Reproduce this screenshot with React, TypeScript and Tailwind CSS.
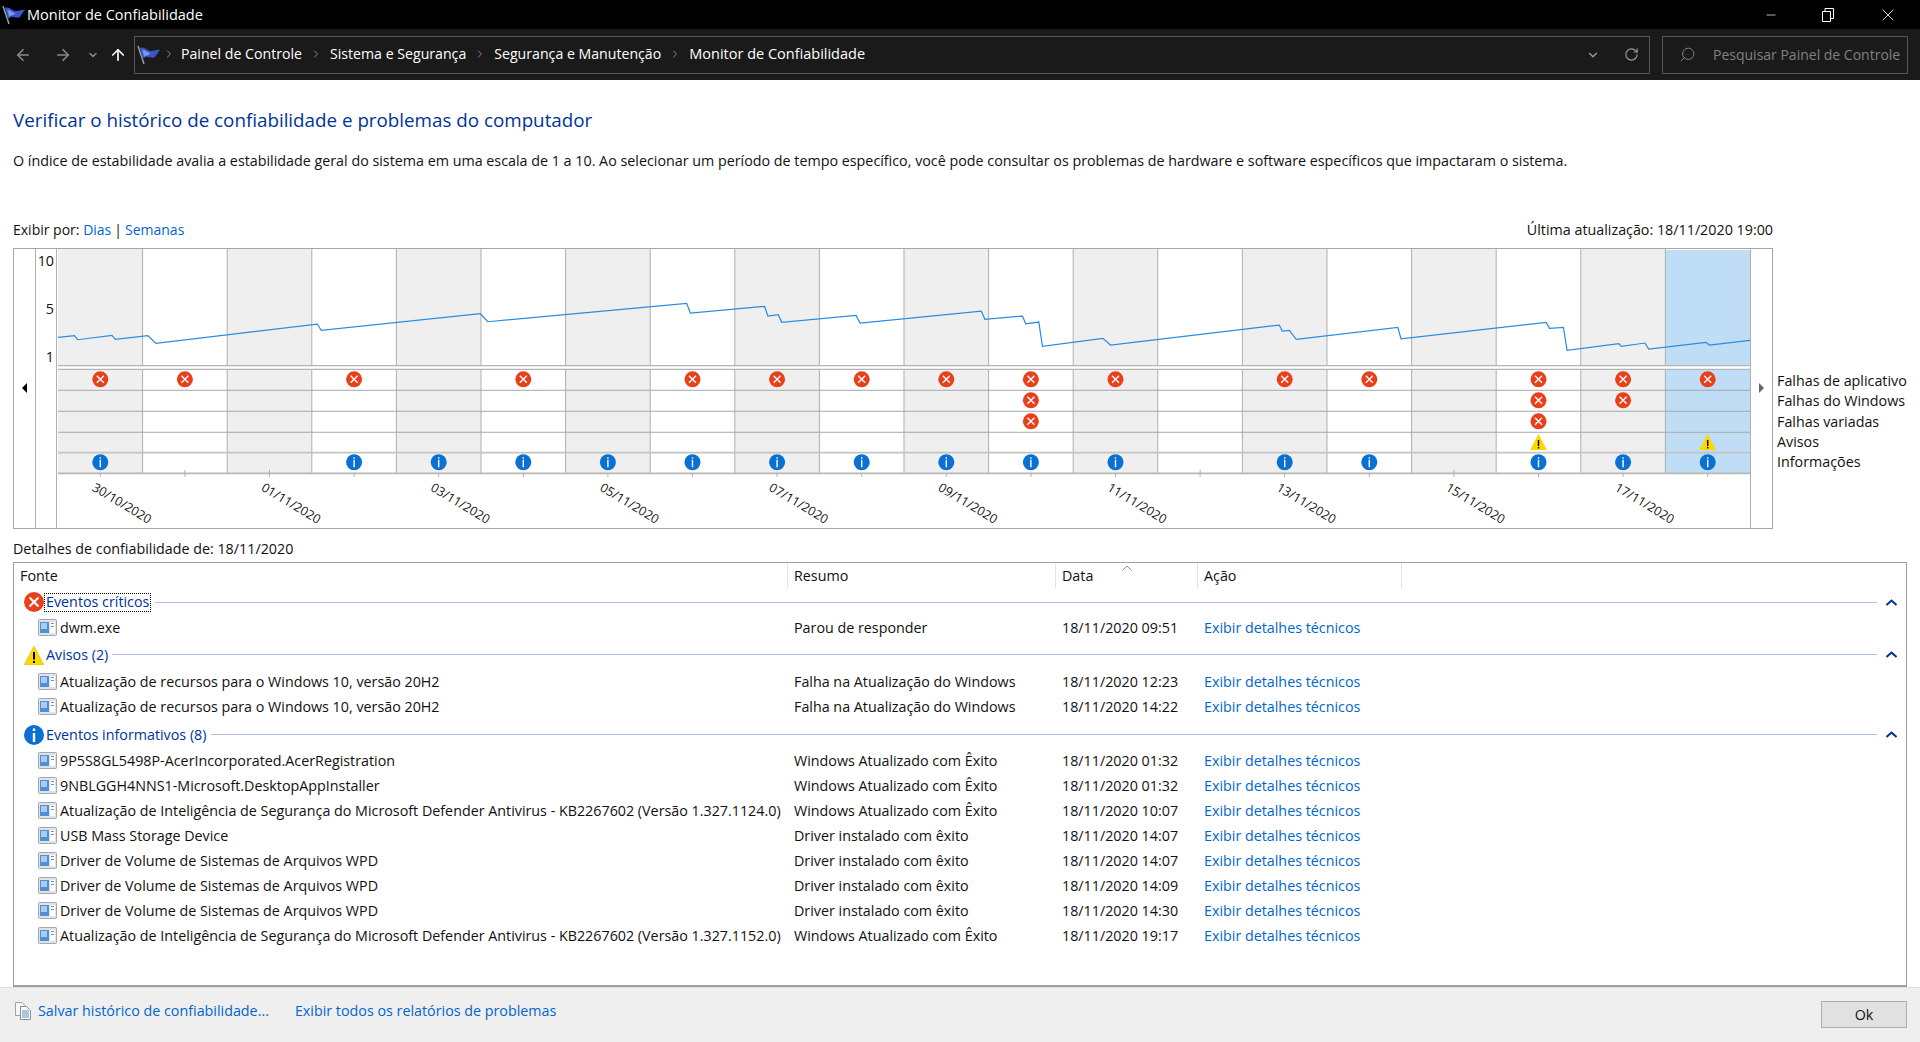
import { ArrowLeft, ArrowRight, ArrowUp, ChevronDown, ChevronRight, Minus, RotateCw, Search, X } from "lucide-react";

const COL_W = 84.65;
const PLOT_X = 57;
const colCenter = (i: number) => PLOT_X + COL_W * (i + 0.5);

const LINE_POINTS =
  "57,337.3 73.5,335.7 76.7,339.7 111,335.3 114.3,339.3 147,335.7 155,343.3 316.3,324 320.4,330.3 479.6,313.7 487,321.7 " +
  "686,303.3 689.8,313 764,306.3 767.3,316 777.6,314.7 781.2,322.3 855.5,315.3 859.6,323 980.8,311 984.5,319.3 1022,316 1025.3,323.7 1038.4,322 1042,346.3 1102.4,338.3 1110.2,345 " +
  "1279,325 1282,331 1289,330.3 1296,339.3 1397.6,327.3 1400.8,338.7 1546,322.3 1549.4,328.3 1563.3,327.3 1567,350.3 1618.8,343.7 1621.2,346.3 1644.9,343 1648.6,349 1706.1,342.3 1709.4,345 1750,340.3";

const ROW_LINES = [390.3, 411.3, 432.3];
const appErrors = [0, 1, 3, 5, 7, 8, 9, 10, 11, 12, 14, 15, 17, 18, 19];
const winErrors = [11, 17, 18];
const miscErrors = [11, 17];
const warnings = [17, 19];
const infos = [0, 3, 4, 5, 6, 7, 8, 9, 10, 11, 12, 14, 15, 17, 18, 19];
const dates = ["30/10/2020", "01/11/2020", "03/11/2020", "05/11/2020", "07/11/2020", "09/11/2020", "11/11/2020", "13/11/2020", "15/11/2020", "17/11/2020"];

const legend = ["Falhas de aplicativo", "Falhas do Windows", "Falhas variadas", "Avisos", "Informações"];
const crumbs = ["Painel de Controle", "Sistema e Segurança", "Segurança e Manutenção", "Monitor de Confiabilidade"];

const OK = "Windows Atualizado com Êxito";
const DRV = "Driver instalado com êxito";
const FU = "Atualização de recursos para o Windows 10, versão 20H2";
const WF = "Falha na Atualização do Windows";
const WPD = "Driver de Volume de Sistemas de Arquivos WPD";

const infoRows = [
  ["9P5S8GL5498P-AcerIncorporated.AcerRegistration", OK, "18/11/2020 01:32"],
  ["9NBLGGH4NNS1-Microsoft.DesktopAppInstaller", OK, "18/11/2020 01:32"],
  ["Atualização de Inteligência de Segurança do Microsoft Defender Antivirus - KB2267602 (Versão 1.327.1124.0)", OK, "18/11/2020 10:07"],
  ["USB Mass Storage Device", DRV, "18/11/2020 14:07"],
  [WPD, DRV, "18/11/2020 14:07"],
  [WPD, DRV, "18/11/2020 14:09"],
  [WPD, DRV, "18/11/2020 14:30"],
  ["Atualização de Inteligência de Segurança do Microsoft Defender Antivirus - KB2267602 (Versão 1.327.1152.0)", OK, "18/11/2020 19:17"],
];

function Flag({ className }: { className: string }) {
  return (
    <svg viewBox="0 0 24 20" className={className}>
      <path d="M1 1 L7 19" stroke="#a0a0a0" strokeWidth="1.5" />
      <path d="M3 3 C7 1 10 6 14 6 C17 6 20 4 23 5 C21 7 20 9 18 12 C15 14 12 11 9 12 C7.500 12.500 6.500 13.500 5.500 14 Z" fill="#3a55c8" />
      <path d="M5.500 5 C8.500 4.500 10 8 14 8 L10.500 10.500 C9 10.500 8 11 7 11.500 Z" fill="#7d97ea" />
    </svg>
  );
}

function ErrorDot({ x, y }: { x: number; y: number }) {
  return (
    <g transform={`translate(${x} ${y})`}>
      <circle r="8" fill="#e9401b" />
      <path d="M-3.500 -3.500 L3.500 3.500 M3.500 -3.500 L-3.500 3.500" stroke="#fff" strokeWidth="1.4" />
    </g>
  );
}

function InfoDot({ x, y }: { x: number; y: number }) {
  return (
    <g transform={`translate(${x} ${y})`}>
      <circle r="8" fill="#0a70d2" />
      <rect x="-0.700" y="-2.500" width="1.400" height="7.500" fill="#fff" />
      <rect x="-0.700" y="-5" width="1.400" height="1.500" fill="#fff" />
    </g>
  );
}

function WarnMark({ x, y }: { x: number; y: number }) {
  return (
    <g transform={`translate(${x} ${y})`}>
      <path d="M0 -9 L8.500 7 L-8.500 7 Z" fill="#fbd800" />
      <rect x="-0.700" y="-3" width="1.400" height="6" fill="#000" />
      <rect x="-0.700" y="4" width="1.400" height="1.500" fill="#000" />
    </g>
  );
}

function Chart() {
  return (
    <svg viewBox="56 249 1694 279" className="h-full w-full">
      {Array.from({ length: 20 }).map((_, i) => (
        <g key={i}>
          <rect x={PLOT_X + COL_W * i} y={i === 19 ? 250 : 249} width={COL_W} height={i === 19 ? 115 : 116} fill={i === 19 ? "#bfddf5" : i % 2 === 0 ? "#efefef" : "#ffffff"} />
          <rect x={PLOT_X + COL_W * i} y="370" width={COL_W} height="103" fill={i === 19 ? "#bfddf5" : i % 2 === 0 ? "#efefef" : "#ffffff"} />
        </g>
      ))}
      {Array.from({ length: 20 }).map((_, i) =>
        i === 0 ? null : (
          <g key={i} stroke="#aeaeae" strokeWidth="1">
            <line x1={PLOT_X + COL_W * i} y1="249" x2={PLOT_X + COL_W * i} y2="366" />
            <line x1={PLOT_X + COL_W * i} y1="369" x2={PLOT_X + COL_W * i} y2="473" />
          </g>
        ),
      )}
      <line x1="57" y1="365.700" x2="1750" y2="365.700" stroke="#b4b4b4" strokeWidth="1.200" />
      <line x1="57" y1="369.300" x2="1750" y2="369.300" stroke="#b4b4b4" strokeWidth="1.200" />
      {ROW_LINES.map((y) => (
        <line key={y} x1="57" y1={y} x2="1750" y2={y} stroke="#a8a8a8" strokeWidth="1" />
      ))}
      <line x1="57" y1="452.700" x2="1750" y2="452.700" stroke="#c4c4c4" strokeWidth="1.600" />
      <line x1="57" y1="473.400" x2="1750" y2="473.400" stroke="#b8b8b8" strokeWidth="1.600" />
      {Array.from({ length: 20 }).map((_, i) => (
        <line key={i} x1={colCenter(i)} y1={infos.includes(i) ? 473 : 470} x2={colCenter(i)} y2="477" stroke="#b0b0b0" strokeWidth="1" />
      ))}
      <polyline points={LINE_POINTS} fill="none" stroke="#2a8be0" strokeWidth="1.200" />
      {appErrors.map((i) => <ErrorDot key={i} x={colCenter(i)} y={379.3} />)}
      {winErrors.map((i) => <ErrorDot key={i} x={colCenter(i)} y={400.3} />)}
      {miscErrors.map((i) => <ErrorDot key={i} x={colCenter(i)} y={421.3} />)}
      {warnings.map((i) => <WarnMark key={i} x={colCenter(i)} y={443} />)}
      {infos.map((i) => <InfoDot key={i} x={colCenter(i)} y={462.3} />)}
      {dates.map((d, n) => (
        <text
          key={d}
          transform={`translate(${colCenter(n * 2) - 9} 490) rotate(31)`}
          fontFamily="'Open Sans', sans-serif"
          fontSize="12.500"
          fill="#111"
        >
          {d}
        </text>
      ))}
      {dates.map((d, n) => (
        <rect key={d} x={144 + 169.3 * n} y="526" width="2" height="2" fill="#fff" />
      ))}
    </svg>
  );
}

function AppIcon() {
  return (
    <svg viewBox="0 0 19 17" className="h-[17px] w-[19px] shrink-0">
      <rect x="0.500" y="0.500" width="18" height="16" rx="1" fill="#dfe3e8" stroke="#a4a8ad" />
      <rect x="2" y="3" width="9" height="11" fill="#4f8fd6" />
      <rect x="3" y="4" width="6" height="6" fill="#a9cdf0" />
      <rect x="12" y="3" width="5" height="11" fill="#ffffff" />
      <rect x="13" y="4" width="3" height="1" fill="#7a8fa8" />
      <rect x="13" y="7" width="3" height="1" fill="#7a8fa8" />
    </svg>
  );
}

function GroupIcon({ kind }: { kind: "error" | "warn" | "info" }) {
  if (kind === "warn") {
    return (
      <svg viewBox="0 0 20 20" className="h-5 w-5 shrink-0">
        <path d="M10 1 L20 20 L0 20 Z" fill="#fbd800" stroke="#e0b400" strokeWidth="0.500" />
        <rect x="9" y="7" width="2" height="7.500" fill="#000" />
        <rect x="9" y="16" width="2" height="2" fill="#000" />
      </svg>
    );
  }
  if (kind === "info") {
    return (
      <svg viewBox="0 0 20 20" className="h-5 w-5 shrink-0">
        <circle cx="10" cy="10" r="10" fill="#0a70d2" />
        <rect x="8.800" y="8" width="2.400" height="9" fill="#fff" />
        <rect x="8.800" y="3.500" width="2.400" height="2.500" fill="#fff" />
      </svg>
    );
  }
  return (
    <svg viewBox="0 0 20 20" className="h-5 w-5 shrink-0">
      <circle cx="10" cy="10" r="10" fill="#e9401b" />
      <path d="M5.500 5.500 L14.500 14.500 M14.500 5.500 L5.500 14.500" stroke="#fff" strokeWidth="2" />
    </svg>
  );
}

function Group({ kind, label, focused, className }: { kind: "error" | "warn" | "info"; label: string; focused?: boolean; className: string }) {
  return (
    <div className={`flex items-center pl-[10px] ${className}`}>
      <GroupIcon kind={kind} />
      <span className={focused ? "ml-[0px] flex h-[19px] items-center border border-dotted border-black px-[1px] text-[#003399]" : "ml-[2px] text-[#003399]"}>{label}</span>
      <div className="ml-[4px] h-px flex-1 bg-[#b0bede]" />
      <div className="flex w-[29px] justify-center pr-[1px]">
        <svg viewBox="0 0 11 7" className="h-[7px] w-[11px]">
          <path d="M0.500 6 L5.500 1.500 L10.500 6" fill="none" stroke="#003399" strokeWidth="2" />
        </svg>
      </div>
    </div>
  );
}

function Row({ source, summary, date }: { source: string; summary: string; date: string }) {
  return (
    <div className="grid h-[25px] grid-cols-[773px_268px_142px_1fr] items-center">
      <div className="flex items-center pl-[24px]">
        <AppIcon />
        <span className="ml-[3px] whitespace-nowrap">{source}</span>
      </div>
      <span className="pl-[7px]">{summary}</span>
      <span className="pl-[7px]">{date}</span>
      <span className="pl-[7px] text-[#0066cc]">Exibir detalhes técnicos</span>
    </div>
  );
}

export default function App() {
  return (
    <div className="flex h-[1042px] w-[1920px] flex-col overflow-hidden bg-white font-['Open_Sans',sans-serif] text-[14.3px] text-[#111]">
      {/* title bar */}
      <div className="flex h-[29px] items-center bg-black text-white">
        <Flag className="ml-[2px] h-[20px] w-[24px]" />
        <span className="ml-[1px] flex-1 text-[14.5px]">Monitor de Confiabilidade</span>
        <div className="flex items-center text-white">
          <Minus size={14} strokeWidth={1.2} className="mr-[44px]" />
          <svg viewBox="0 0 12 14" className="mr-[44px] h-[14px] w-[12px]">
            <path d="M0.500 3.500 H8.500 V13.500 H0.500 Z M3 3 V0.500 H11.500 V10.500 H9" fill="none" stroke="#fff" />
          </svg>
          <X size={20} strokeWidth={1} className="mr-[22px]" />
        </div>
      </div>

      {/* address bar */}
      <div className="flex h-[51px] items-center bg-[#1a1a1a] text-white">
        <div className="flex w-[134px] items-center">
          <ArrowLeft size={18} strokeWidth={2.2} className="ml-[14px] text-[#8a8a8a]" />
          <ArrowRight size={18} strokeWidth={2.2} className="ml-[22px] text-[#8a8a8a]" />
          <ChevronDown size={12} strokeWidth={3} className="ml-[15px] text-[#8a8a8a]" />
          <ArrowUp size={18} strokeWidth={2.2} className="ml-[10px] text-white" />
        </div>
        <div className="flex h-[38px] w-[1516px] items-center border border-[#555]">
          <Flag className="ml-[2px] h-[20px] w-[24px]" />
          {crumbs.map((c, i) => (
            <div key={c} className={i === 3 ? "flex items-center pb-[1px] text-[14.5px]" : "flex items-center pb-[1px] text-[14.15px]"}>
              <ChevronRight size={12} strokeWidth={2} className={i === 0 ? "ml-[2px] mr-[6px] text-[#8a8a8a]" : "mx-[8px] text-[#8a8a8a]"} />
              <span>{c}</span>
            </div>
          ))}
          <div className="flex-1" />
          <ChevronDown size={14} strokeWidth={2.4} className="mr-[24px] text-[#9a9a9a]" />
          <RotateCw size={15} strokeWidth={1.8} className="mr-[10px] text-[#9a9a9a]" />
        </div>
        <div className="ml-[12px] flex h-[38px] w-[246px] items-center border border-[#555] text-[14px] text-[#808080]">
          <Search size={17} strokeWidth={1.4} className="ml-[16px] -scale-x-100" />
          <span className="ml-[17px] whitespace-nowrap">Pesquisar Painel de Controle</span>
        </div>
      </div>

      {/* page */}
      <div className="flex min-h-0 flex-1 flex-col px-[13px]">
        <h1 className="mt-[26px] h-[28px] text-[18.8px] leading-[28px] font-normal text-[#003399]">
          Verificar o histórico de confiabilidade e problemas do computador
        </h1>
        <p className="mt-[17px] h-[20px] leading-[20px] whitespace-nowrap">
          O índice de estabilidade avalia a estabilidade geral do sistema em uma escala de 1 a 10. Ao selecionar um período de tempo específico, você pode consultar os problemas de hardware e software específicos que impactaram o sistema.
        </p>

        <div className="mt-[49px] flex h-[20px] w-[1760px] items-center justify-between leading-[20px]">
          <span className="text-[14px]">
            Exibir por: <span className="text-[#0066cc]">Dias</span>
            <span className="mx-[3px]">|</span>
            <span className="text-[#0066cc]">Semanas</span>
          </span>
          <span>Última atualização: 18/11/2020 19:00</span>
        </div>

        {/* chart + legend */}
        <div className="mt-[8px] flex h-[281px]">
          <div className="flex w-[1760px] border border-[#a6a6a6]">
            <div className="flex w-[22px] items-center justify-center border-r border-[#b0b0b0] pb-[1px]">
              <div className="h-0 w-0 border-y-[5px] border-r-[5px] border-y-transparent border-r-black" />
            </div>
            <div className="flex w-[21px] shrink-0 flex-col items-end border-r border-[#b0b0b0] pr-[2px] leading-[20px]">
              <span className="mt-[2px]">10</span>
              <span className="mt-[28px]">5</span>
              <span className="mt-[28px]">1</span>
            </div>
            <div className="min-w-0 flex-1">
              <Chart />
            </div>
            <div className="flex w-[22px] items-center justify-center border-l border-[#b0b0b0] pb-[1px]">
              <div className="h-0 w-0 border-y-[5px] border-l-[5px] border-y-transparent border-l-[#666]" />
            </div>
          </div>
          <div className="ml-[4px] flex flex-col pt-[123px] leading-[20.25px] whitespace-nowrap">
            {legend.map((l) => (
              <span key={l}>{l}</span>
            ))}
          </div>
        </div>

        <div className="mt-[10px] h-[20px] leading-[20px]">Detalhes de confiabilidade de: 18/11/2020</div>

        {/* details table */}
        <div className="mt-[3px] w-[1894px] flex-1 border border-b-2 border-[#a0a0a0]">
          <div className="relative grid h-[26px] grid-cols-[773px_268px_142px_205px] items-center">
            <span className="pl-[6px]">Fonte</span>
            <span className="flex h-full items-center border-l border-[#e4e4e4] pl-[6px]">Resumo</span>
            <span className="flex h-full items-center border-l border-[#e4e4e4] pl-[6px]">Data</span>
            <span className="flex h-full items-center border-x border-[#e4e4e4] pl-[6px]">Ação</span>
            <svg viewBox="0 0 10 6" className="absolute top-[2px] left-[1108px] h-[6px] w-[10px]">
              <path d="M0.500 5.500 L5 1 L9.500 5.500" fill="none" stroke="#8a8a8a" />
            </svg>
          </div>
          <Group kind="error" label="Eventos críticos" focused className="h-[26px]" />
          <Row source="dwm.exe" summary="Parou de responder" date="18/11/2020 09:51" />
          <Group kind="warn" label="Avisos (2)" className="h-[29px]" />
          <Row source={FU} summary={WF} date="18/11/2020 12:23" />
          <Row source={FU} summary={WF} date="18/11/2020 14:22" />
          <Group kind="info" label="Eventos informativos (8)" className="mt-[2px] h-[27px]" />
          {infoRows.map((r, i) => (
            <Row key={i} source={r[0]} summary={r[1]} date={r[2]} />
          ))}
        </div>
      </div>

      {/* footer */}
      <div className="flex h-[55px] items-center border-t border-[#dcdcdc] bg-[#efefef] pb-[9px] text-[#0066cc]">
        <svg viewBox="0 0 16 18" className="ml-[15px] h-[18px] w-[16px]">
          <path d="M0.500 0.500 H7 L10 3.500 V13.500 H0.500 Z" fill="#f6f6f6" stroke="#9aa2ac" />
          <path d="M5.500 4.500 H11.500 L15.500 8.500 V17.500 H5.500 Z" fill="#ffffff" stroke="#7f8ea0" />
          <path d="M7 9 H14 M7 11 H14 M7 13 H14 M7 15 H14" stroke="#5c8bc0" />
        </svg>
        <span className="ml-[7px]">Salvar histórico de confiabilidade...</span>
        <span className="ml-[26px] flex-1">Exibir todos os relatórios de problemas</span>
        <button className="mt-[8px] mr-[13px] h-[27px] w-[86px] border border-[#adadad] bg-[#e1e1e1] text-[#111]">Ok</button>
      </div>
    </div>
  );
}
